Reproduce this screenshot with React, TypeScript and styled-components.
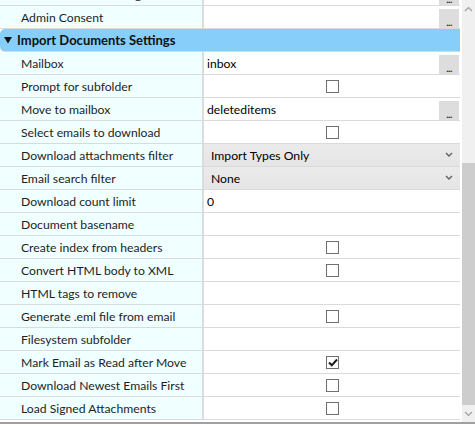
import React from 'react';
import styled, { createGlobalStyle } from 'styled-components';

const GlobalStyle = createGlobalStyle`
  html, body {
    margin: 0;
    padding: 0;
    background: #ffffff;
  }
  body {
    font-family: Lato, "Noto Sans", sans-serif;
    font-size: 12.2px;
    color: #1e1e1e;
  }
`;

const Window = styled.div`
  display: flex;
  width: 475px;
  height: 426px;
  overflow: hidden;
  background: #ffffff;
`;

const Grid = styled.div`
  flex: 1;
  display: flex;
  flex-direction: column;
  height: 422px;
  overflow: hidden;
  border-bottom: 2px solid #a0a0a0;
  padding-right: 2px;
`;

const Row = styled.div<{ $clip?: boolean }>`
  display: flex;
  height: 22px;
  flex-shrink: 0;
  border-bottom: 1px solid #dadada;
  margin-top: ${(p) => (p.$clip ? '-17px' : '0')};
`;

const NameCell = styled.div`
  width: 204px;
  flex-shrink: 0;
  display: flex;
  align-items: center;
  padding-left: 21px;
  box-sizing: border-box;
  background: #f0ffff;
  border-right: 2px solid #dcdcdc;
  white-space: nowrap;
  color: #1e1e1e;
`;

const ValueCell = styled.div<{ $combo?: boolean }>`
  flex: 1;
  display: flex;
  align-items: center;
  padding-left: ${(p) => (p.$combo ? '7px' : '3px')};
  padding-right: 1px;
  background: ${(p) => (p.$combo ? 'linear-gradient(#ebebeb, #e5e5e5)' : '#ffffff')};
  color: #000000;
  white-space: nowrap;
`;

const ValueText = styled.span`
  flex: 1;
`;

const Ellipsis = styled.div`
  width: 20px;
  height: 19px;
  margin-top: 2px;
  background: #dddddd;
  display: flex;
  align-items: flex-end;
  justify-content: center;
  font-size: 10px;
  line-height: 12px;
  font-weight: bold;
  color: #222;
  letter-spacing: -0.5px;
`;

const Chevron = styled.svg`
  width: 8px;
  height: 6px;
  margin-right: 6px;
`;

const CheckCell = styled.div`
  flex: 1;
  display: flex;
  align-items: center;
  justify-content: center;
`;

const Box = styled.div`
  width: 11px;
  height: 11px;
  border: 1px solid #707070;
  background: #ffffff;
  display: flex;
  align-items: center;
  justify-content: center;
  margin-left: 1px;
`;

const Header = styled.div`
  display: flex;
  align-items: center;
  height: 22px;
  flex-shrink: 0;
  background: #87cefa;
  border-radius: 5px 0 0 5px;
  border-bottom: 1px solid #dadada;
  font-weight: bold;
  font-size: 13px;
  color: #111;
  padding-left: 4px;
  gap: 5px;
`;

const Triangle = styled.svg`
  width: 8px;
  height: 8px;
`;

const Scrollbar = styled.div`
  width: 13px;
  height: 422px;
  background: #f0f0f0;
  display: flex;
  flex-direction: column;
  border-bottom: 2px solid #a0a0a0;
`;

const ArrowBtn = styled.div`
  height: 17px;
  display: flex;
  align-items: center;
  justify-content: center;
`;

const Track = styled.div`
  flex: 1;
  display: flex;
  flex-direction: column;
  padding-top: 146px;
`;

const Thumb = styled.div`
  flex: 1;
  background: #cdcdcd;
`;

type Kind = 'text' | 'browse' | 'check' | 'combo';
type Item = { name: string; kind: Kind; value?: string; checked?: boolean };

const items: Item[] = [
  { name: 'Mailbox', kind: 'browse', value: 'inbox' },
  { name: 'Prompt for subfolder', kind: 'check' },
  { name: 'Move to mailbox', kind: 'browse', value: 'deleteditems' },
  { name: 'Select emails to download', kind: 'check' },
  { name: 'Download attachments filter', kind: 'combo', value: 'Import Types Only' },
  { name: 'Email search filter', kind: 'combo', value: 'None' },
  { name: 'Download count limit', kind: 'text', value: '0' },
  { name: 'Document basename', kind: 'text', value: '' },
  { name: 'Create index from headers', kind: 'check' },
  { name: 'Convert HTML body to XML', kind: 'check' },
  { name: 'HTML tags to remove', kind: 'text', value: '' },
  { name: 'Generate .eml file from email', kind: 'check' },
  { name: 'Filesystem subfolder', kind: 'text', value: '' },
  { name: 'Mark Email as Read after Move', kind: 'check', checked: true },
  { name: 'Download Newest Emails First', kind: 'check' },
  { name: 'Load Signed Attachments', kind: 'check' },
];

const Check = () => (
  <svg width="10" height="9" viewBox="0 0 10 9">
    <path d="M1 4.5 L3.8 7.3 L9 1.5" fill="none" stroke="#1a1a1a" strokeWidth="2" />
  </svg>
);

const Value: React.FC<{ item: Item }> = ({ item }) => {
  if (item.kind === 'check') {
    return (
      <CheckCell>
        <Box>{item.checked && <Check />}</Box>
      </CheckCell>
    );
  }
  if (item.kind === 'combo') {
    return (
      <ValueCell $combo>
        <ValueText>{item.value}</ValueText>
        <Chevron viewBox="0 0 8 6">
          <path d="M1 1 L4 4 L7 1" fill="none" stroke="#606060" strokeWidth="1.4" />
        </Chevron>
      </ValueCell>
    );
  }
  return (
    <ValueCell>
      <ValueText>{item.value}</ValueText>
      {item.kind === 'browse' && <Ellipsis>...</Ellipsis>}
    </ValueCell>
  );
};

const App: React.FC = () => {
  return (
    <>
      <GlobalStyle />
      <Window>
        <Grid>
          <Row $clip>
            <NameCell>Authentication Settings</NameCell>
            <ValueCell>
              <ValueText />
              <Ellipsis>...</Ellipsis>
            </ValueCell>
          </Row>
          <Row>
            <NameCell>Admin Consent</NameCell>
            <ValueCell>
              <ValueText />
              <Ellipsis>...</Ellipsis>
            </ValueCell>
          </Row>
          <Header>
            <Triangle viewBox="0 0 8 8">
              <path d="M0 1 L8 1 L4 7.5 Z" fill="#111" />
            </Triangle>
            Import Documents Settings
          </Header>
          {items.map((it) => (
            <Row key={it.name}>
              <NameCell>{it.name}</NameCell>
              <Value item={it} />
            </Row>
          ))}
        </Grid>
        <Scrollbar>
          <ArrowBtn>
            <svg width="9" height="6" viewBox="0 0 9 6">
              <path d="M1 5 L4.5 1.5 L8 5" fill="none" stroke="#a0a0a0" strokeWidth="1.2" />
            </svg>
          </ArrowBtn>
          <Track>
            <Thumb />
          </Track>
          <ArrowBtn>
            <svg width="9" height="6" viewBox="0 0 9 6">
              <path d="M1 1 L4.5 4.5 L8 1" fill="none" stroke="#a0a0a0" strokeWidth="1.2" />
            </svg>
          </ArrowBtn>
        </Scrollbar>
      </Window>
    </>
  );
};

export default App;
